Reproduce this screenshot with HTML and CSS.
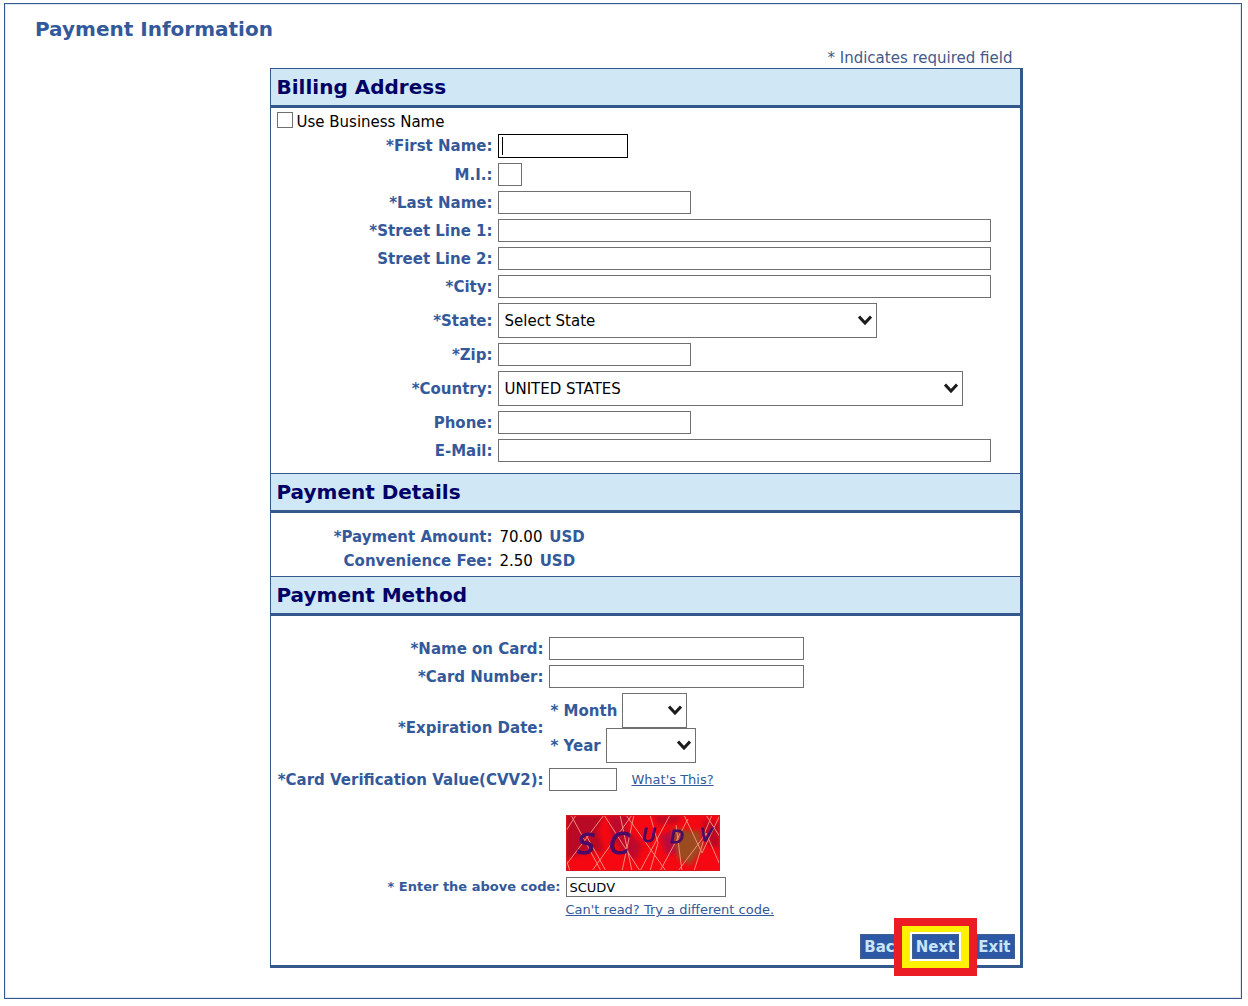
FILE: index.html
```html
<!DOCTYPE html>
<html lang="en">
<head>
  <meta charset="UTF-8">
  <meta name="viewport" content="width=device-width, initial-scale=1.0">
  <title>Payment Information</title>
  <link rel="stylesheet" href="styles.css">
</head>
<body>
  <main class="page">
    <h1>Payment Information</h1>
    <div class="content">
    <form class="payment">
      <p class="required-note">* Indicates required field</p>
      <div class="card">
        <h2>Billing Address</h2>
        <div class="section billing">
          <div class="check-row">
            <input type="checkbox" id="business">
            <label for="business">Use Business Name</label>
          </div>
          <div class="row">
            <label for="first-name">*First Name:</label>
            <input type="text" id="first-name" class="short active">
          </div>
          <div class="row">
            <label for="mi">M.I.:</label>
            <input type="text" id="mi" class="tiny" maxlength="1">
          </div>
          <div class="row">
            <label for="last-name">*Last Name:</label>
            <input type="text" id="last-name" class="medium">
          </div>
          <div class="row">
            <label for="street1">*Street Line 1:</label>
            <input type="text" id="street1" class="long">
          </div>
          <div class="row">
            <label for="street2">Street Line 2:</label>
            <input type="text" id="street2" class="long">
          </div>
          <div class="row">
            <label for="city">*City:</label>
            <input type="text" id="city" class="long">
          </div>
          <div class="row">
            <label for="state">*State:</label>
            <div class="select state">
              <select id="state"><option>Select State</option></select>
              <svg class="arrow" viewBox="0 0 14 10"><path d="M1 1.5 L7 8 L13 1.5"/></svg>
            </div>
          </div>
          <div class="row">
            <label for="zip">*Zip:</label>
            <input type="text" id="zip" class="medium">
          </div>
          <div class="row">
            <label for="country">*Country:</label>
            <div class="select country">
              <select id="country"><option>UNITED STATES</option></select>
              <svg class="arrow" viewBox="0 0 14 10"><path d="M1 1.5 L7 8 L13 1.5"/></svg>
            </div>
          </div>
          <div class="row">
            <label for="phone">Phone:</label>
            <input type="text" id="phone" class="medium">
          </div>
          <div class="row">
            <label for="email">E-Mail:</label>
            <input type="text" id="email" class="long">
          </div>
        </div>

        <h2>Payment Details</h2>
        <div class="section details">
          <div class="row">
            <span class="name">*Payment Amount:</span>
            <span class="amount">70.00 <b>USD</b></span>
          </div>
          <div class="row">
            <span class="name">Convenience Fee:</span>
            <span class="amount">2.50 <b>USD</b></span>
          </div>
        </div>

        <h2>Payment Method</h2>
        <div class="section method">
          <div class="row">
            <label for="card-name">*Name on Card:</label>
            <input type="text" id="card-name" class="card-field">
          </div>
          <div class="row">
            <label for="card-number">*Card Number:</label>
            <input type="text" id="card-number" class="card-field">
          </div>
          <div class="row">
            <span class="name">*Expiration Date:</span>
            <div class="expiry">
              <div class="expiry-line">
                <label for="month">* Month</label>
                <div class="select month">
                  <select id="month"><option></option></select>
                  <svg class="arrow" viewBox="0 0 14 10"><path d="M1 1.5 L7 8 L13 1.5"/></svg>
                </div>
              </div>
              <div class="expiry-line">
                <label for="year">* Year</label>
                <div class="select year">
                  <select id="year"><option></option></select>
                  <svg class="arrow" viewBox="0 0 14 10"><path d="M1 1.5 L7 8 L13 1.5"/></svg>
                </div>
              </div>
            </div>
          </div>
          <div class="row">
            <label for="cvv">*Card Verification Value(CVV2):</label>
            <div class="cvv-line">
              <input type="text" id="cvv" class="cvv">
              <a href="#">What's This?</a>
            </div>
          </div>
        </div>

        <!-- Captcha -->
        <div class="captcha">
          <svg class="captcha-image" viewBox="0 0 154 56" role="img" aria-label="Captcha">
            <rect width="154" height="56" fill="#f50812"/>
            <g class="patches">
              <path fill="#b80a24" d="M0 0H38L32 16L38 36L20 38L0 44Z"/>
              <path fill="#bd0a2c" d="M42 0H66L60 14L76 30L70 46L58 38L46 22Z"/>
              <path fill="#c40824" d="M88 0H116L112 8L92 10Z"/>
              <path fill="#b90c3c" d="M94 20L106 16L112 38L100 40Z"/>
              <path fill="#9c4a20" d="M106 14L134 16L137 34L124 50L112 44Z"/>
              <path fill="#bd0822" d="M136 4L154 8V34L140 30Z"/>
            </g>
            <path class="scratches" d="M5 0L35 56M0 50L38 0M38 0L74 56M0 16L10 0M26 56L66 0M20 20L40 56M54 0L66 56M68 0L56 56M60 0L100 56M74 56L104 0M84 0L92 28L84 56M94 56L122 4M118 0L136 38L154 0M112 56L136 24L146 0M110 10L116 56M128 56L140 18L154 50M140 0L154 22M0 44L4 56"/>
            <g class="letters">
              <text x="11" y="39" font-size="28">S</text>
              <text x="43" y="39" font-size="30">C</text>
              <text x="76" y="27" font-size="19">U</text>
              <text x="104" y="28" font-size="18">D</text>
              <text x="134" y="26" font-size="18">V</text>
            </g>
            <rect x="0.5" y="0.5" width="153" height="55" fill="none" stroke="#d81820"/>
          </svg>
          <label for="code">* Enter the above code:</label>
          <input type="text" id="code" value="SCUDV">
          <a href="#">Can't read? Try a different code.</a>
        </div>

        <div class="buttons">
          <button type="button" class="back">Back</button>
          <div class="next-wrap">
            <span class="highlight"></span>
            <button type="button" class="next">Next</button>
          </div>
          <button type="button" class="exit">Exit</button>
        </div>
      </div>
    </form>
    </div>
  </main>
</body>
</html>
```
FILE: styles.css
```css
* {
  margin: 0;
  padding: 0;
  box-sizing: border-box;
}

body {
  font-family: Verdana, 'DejaVu Sans', sans-serif;
  font-size: 15px;
  line-height: 20px;
  background-color: #fff;
  color: #000;
  padding: 3px 6px 7px 4px;
}

.page {
  border: 1px solid #34588c;
  box-shadow: inset 0 0 0 1px #dfe8f2;
  padding: 12px 0 30px;
}

h1 {
  font-size: 20px;
  line-height: 26px;
  padding-left: 30px;
  color: #34599a;
}

.content {
  padding: 6px 0 0 46px;
}

.payment {
  width: 753px;
  max-width: 100%;
  margin: 0 auto;
}

.required-note {
  text-align: right;
  padding-right: 10px;
  color: #44598a;
}

.card {
  border-left: 1px solid #34588c;
  border-right: 3px solid #34588c;
  border-bottom: 3px solid #34588c;
}

h2 {
  font-size: 20px;
  line-height: 36px;
  padding-left: 6px;
  color: #000066;
  background-color: #d0e7f5;
  border-top: 1px solid #34588c;
  border-bottom: 3px solid #34588c;
}

.section {
  display: flex;
  flex-direction: column;
  gap: 5px;
}

.billing {
  padding: 4px 0 11px;
}

.row {
  display: grid;
  grid-template-columns: 222px 1fr;
  column-gap: 5px;
  align-items: center;
}

.row label,
.row .name,
.captcha label {
  font-weight: bold;
  text-align: right;
  color: #34599a;
  white-space: nowrap;
}

.check-row {
  display: flex;
  gap: 4px;
  margin-left: 6px;
  height: 17px;
}

.check-row input {
  appearance: none;
  width: 16px;
  height: 16px;
  border: 1px solid #707070;
  background-color: #fff;
}

input[type="text"] {
  height: 23px;
  border: 1px solid #707070;
  background-color: #fff;
  font-family: inherit;
  font-size: 13px;
  padding: 0 3px;
  outline: none;
}

.tiny { width: 24px; }
.short { width: 130px; }
.medium { width: 193px; }
.long { width: 493px; }
.card-field { width: 255px; }
.cvv { width: 68px; }

/* field with the cursor in it */
input.active {
  height: 24px;
  border-color: #000;
  background: linear-gradient(#000, #000) 3px 2px / 1px 18px no-repeat #fff;
}

.select {
  position: relative;
  height: 35px;
}

.select select {
  appearance: none;
  width: 100%;
  height: 100%;
  padding: 0 6px;
  border: 1px solid #707070;
  border-radius: 0;
  background-color: #fff;
  color: #000;
  font-family: inherit;
  font-size: 15px;
}

.select .arrow {
  position: absolute;
  right: 5px;
  top: 12px;
  width: 14px;
  height: 10px;
  fill: none;
  stroke: #1c1c1c;
  stroke-width: 3;
  pointer-events: none;
}

.state { width: 379px; }
.country { width: 465px; }
.month { width: 65px; }
.year { width: 90px; }

.details {
  padding: 14px 0 5px;
  gap: 4px;
}

.amount {
  padding-left: 2px;
}

.amount b {
  color: #34599a;
  margin-left: 2px;
}

.method {
  padding-top: 21px;
}

.method .row {
  grid-template-columns: 273px 1fr;
}

.expiry-line {
  display: flex;
  align-items: center;
  gap: 5px;
  padding-left: 2px;
}

.cvv-line {
  display: flex;
  align-items: center;
  gap: 15px;
}

a {
  font-size: 13px;
  color: #34599a;
}

.captcha {
  display: grid;
  grid-template-columns: 290px 1fr;
  column-gap: 5px;
  align-items: center;
  margin-top: 24px;
}

.captcha-image {
  grid-column: 2;
  width: 154px;
  height: 56px;
  margin-bottom: 6px;
}

.captcha label {
  font-size: 13px;
}

.captcha input[type="text"] {
  width: 160px;
  height: 20px;
}

.captcha a {
  grid-column: 2;
  justify-self: start;
  margin-top: 3px;
}

.patches {
  filter: blur(2px);
}

.letters {
  font-family: 'DejaVu Sans', sans-serif;
  font-style: italic;
  fill: #4a0a68;
  stroke: #4a0a68;
}

.scratches {
  fill: none;
  stroke: #f58a78;
  stroke-width: 1;
}

.buttons {
  display: flex;
  justify-content: flex-end;
  margin-top: 14px;
  padding: 0 5px 6px 0;
}

.buttons button {
  height: 25px;
  padding: 0 3px;
  border: 1px solid #41608f;
  background-color: #2d58a5;
  color: #c8e4fa;
  font-family: inherit;
  font-size: 15px;
  font-weight: bold;
}

.next-wrap {
  position: relative;
  margin: 0 15px 0 3px;
}

.buttons .next {
  position: relative;
  outline: 2px solid #fff;
}

/* yellow and red frame round the next step */
.highlight {
  position: absolute;
  inset: -16px -18px -17px;
  border: 8px solid #ec1c24;
  background-color: #fff200;
}
```
